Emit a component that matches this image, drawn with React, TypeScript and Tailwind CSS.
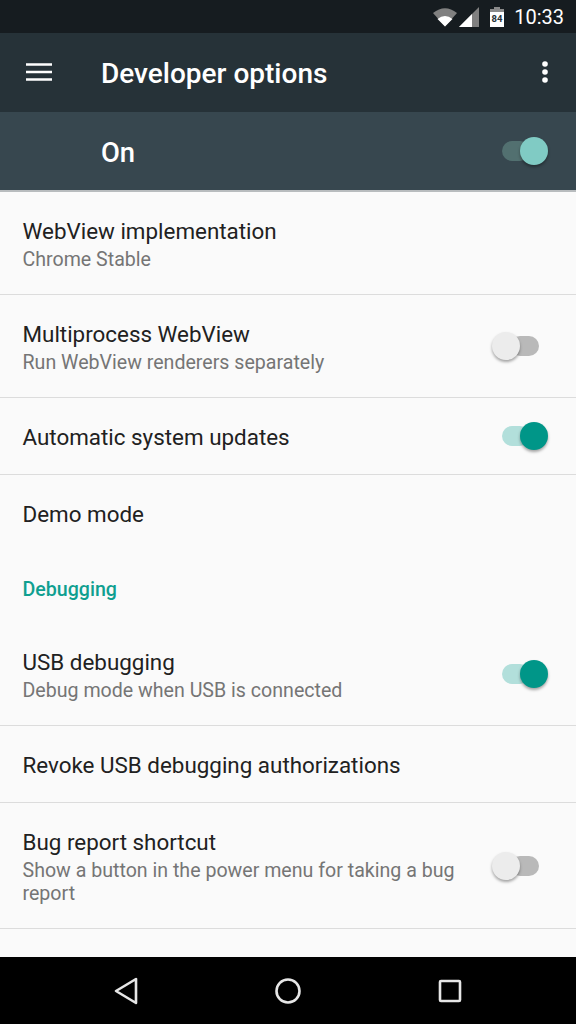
import type { ReactNode } from "react";

function Toggle({ on, header }: { on: boolean; header?: boolean }) {
  const track = !on ? "bg-[#b9b9b9]" : header ? "bg-[#527070]" : "bg-[#b2dfdb]";
  const thumb = !on ? "bg-[#ececec]" : header ? "bg-[#80cbc4]" : "bg-[#009688]";
  return (
    <div className={`flex items-center ${on ? "mr-[28px] flex-row-reverse" : "mr-[37px]"}`}>
      <div className={`w-[28px] h-[28px] rounded-full shadow-[0_2px_3px_rgba(0,0,0,0.35)] shrink-0 z-10 ${thumb}`} />
      <div className={`h-[20px] rounded-full ${on ? "w-[28px] -mr-[10px]" : "w-[29px] -ml-[10px]"} ${track}`} />
    </div>
  );
}

function Row({
  title,
  summary,
  height,
  toggle,
  textClass = "",
  border = true,
}: {
  title: string;
  summary?: ReactNode;
  height: string;
  toggle?: "on" | "off";
  textClass?: string;
  border?: boolean;
}) {
  return (
    <div className={`flex items-center justify-between pl-[22.5px] ${height} ${border ? "border-b border-[#dcdcdc]" : ""}`}>
      <div className={`w-[450px] ${textClass}`}>
        <div className="text-[22.4px] leading-[30px] text-[#212121]">{title}</div>
        {summary && <div className="text-[19.6px] leading-[23px] mt-[2px] text-[#757575]">{summary}</div>}
      </div>
      {toggle && <Toggle on={toggle === "on"} />}
    </div>
  );
}

export default function App() {
  return (
    <div className="w-[576px] h-[1024px] flex flex-col bg-[#fafafa] font-['Roboto',sans-serif] overflow-hidden">
      <div className="h-[33px] bg-[#161c20] flex items-center justify-end pr-[12px] text-white">
        <svg width="26" height="20" viewBox="0 0 26 20">
          <path d="M1 6 Q13 -3.5 25 6 L13 19.5 Z" fill="#808080" />
          <path d="M5.5 12 Q13 6 20.5 12 L13 19.5 Z" fill="#ffffff" />
        </svg>
        <svg width="20" height="20" viewBox="0 0 20 20" className="ml-[1px]">
          <path d="M0 20 L20 0 V20 Z" fill="#808080" />
          <path d="M0 20 L13 7 V20 Z" fill="#ffffff" />
        </svg>
        <svg width="14" height="20" viewBox="0 0 14 20" className="ml-[11px] mr-[10px]">
          <path d="M4 0 H10 V2 H14 V20 H0 V2 H4 Z" fill="#ffffff" />
          <path d="M4 0 H10 V2 H14 V5 H0 V2 H4 Z" fill="#8a8a8a" />
          <text x="7" y="15" textAnchor="middle" fontSize="9.5" fontWeight="700" fill="#263238" fontFamily="Roboto, sans-serif">84</text>
        </svg>
        <span className="text-[20px] leading-none">10:33</span>
      </div>

      <div className="h-[79px] bg-[#263238] flex items-center text-white">
        <svg width="26" height="18" viewBox="0 0 26 18" className="ml-[26px] -mt-[1px]">
          <path d="M0 1.5 H26 M0 9 H26 M0 16.5 H26" stroke="#ffffff" strokeWidth="2.6" />
        </svg>
        <div className="ml-[49px] pt-[3px] text-[28px] font-medium flex-1">Developer options</div>
        <svg width="8" height="24" viewBox="0 0 8 24" className="mr-[27px] -mt-[2px]">
          <circle cx="4" cy="4" r="2.8" fill="#ffffff" />
          <circle cx="4" cy="12" r="2.8" fill="#ffffff" />
          <circle cx="4" cy="20" r="2.8" fill="#ffffff" />
        </svg>
      </div>

      <div className="h-[80px] bg-[#37474f] border-b-2 border-[#b8bcbe] flex items-center justify-between text-white">
        <div className="ml-[101px] pt-[5px] text-[27.4px] font-medium">On</div>
        <Toggle on header />
      </div>

      <Row title="WebView implementation" summary="Chrome Stable" height="h-[103px]" />
      <Row title="Multiprocess WebView" summary="Run WebView renderers separately" height="h-[103px]" toggle="off" />
      <Row title="Automatic system updates" height="h-[77px]" toggle="on" textClass="pt-[2px]" />
      <Row title="Demo mode" height="h-[78px]" border={false} />
      <div className="h-[70px] pl-[22.5px] pt-[24px] text-[19.6px] leading-[26px] font-medium text-[#0f9f90]">Debugging</div>
      <Row title="USB debugging" summary="Debug mode when USB is connected" height="h-[103px]" toggle="on" />
      <Row title="Revoke USB debugging authorizations" height="h-[77px]" textClass="pt-[2px]" />
      <Row
        title="Bug report shortcut"
        summary="Show a button in the power menu for taking a bug report"
        height="h-[126px]"
        toggle="off"
      />
      <div className="flex-1" />

      <div className="h-[67px] bg-black flex items-center">
        <svg width="24" height="28" viewBox="0 0 24 28" className="ml-[114px]">
          <path d="M22 2 V26 L2 14 Z" fill="none" stroke="#e6e6e6" strokeWidth="2.6" strokeLinejoin="round" />
        </svg>
        <svg width="26" height="26" viewBox="0 0 26 26" className="ml-[137px]">
          <circle cx="13" cy="13" r="11.5" fill="none" stroke="#e6e6e6" strokeWidth="2.6" />
        </svg>
        <svg width="24" height="24" viewBox="0 0 24 24" className="ml-[137px]">
          <rect x="2" y="2" width="20" height="20" rx="1" fill="none" stroke="#e6e6e6" strokeWidth="2.6" />
        </svg>
      </div>
    </div>
  );
}
